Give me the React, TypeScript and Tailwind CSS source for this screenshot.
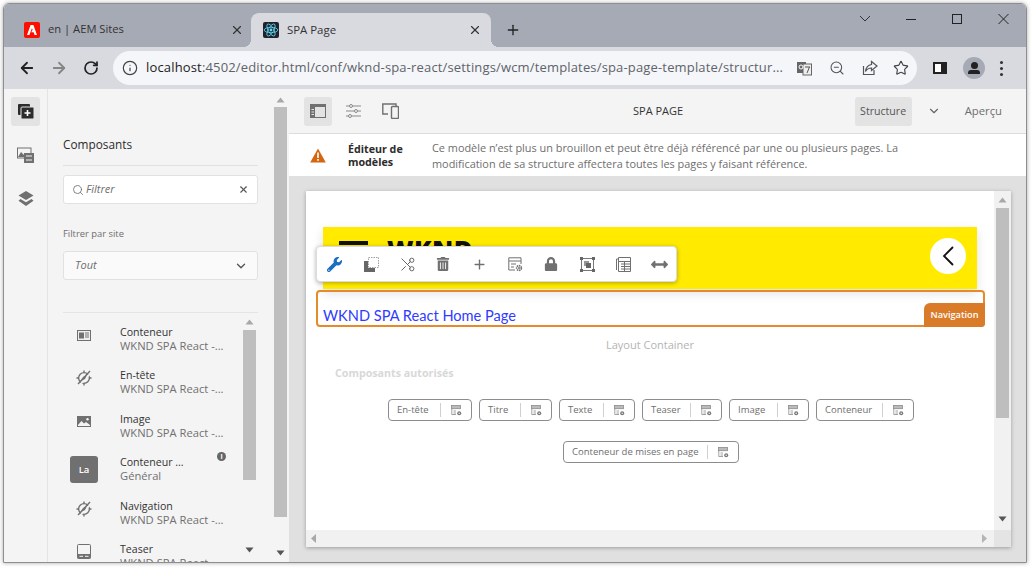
import React from "react";
import { FaWrench, FaTrashAlt, FaLock, FaArrowsAltH } from "react-icons/fa";
import { Scissors, X, Search, ChevronDown, ArrowLeft, ArrowRight, RotateCw, Info, ZoomOut, Star, Plus } from "lucide-react";

const Triangle = ({ dir, cls }: { dir: "up" | "down" | "right"; cls: string }) => (
  <svg width="9" height="6" viewBox="0 0 9 6" className={cls}>
    {dir === "up" && <path d="M4.5 0.5L8.5 5.5H0.5Z" fill="#a8a8a8" />}
    {dir === "down" && <path d="M4.5 5.5L8.5 0.5H0.5Z" fill="#555" />}
    {dir === "right" && <path d="M2 0L7 3L2 6Z" fill="#b4b4b4" />}
  </svg>
);

const AdobeIcon = () => (
  <svg width="16" height="16" viewBox="0 0 16 16">
    <rect width="16" height="16" rx="2" fill="#fa0f00" />
    <path d="M6.6 3H9.4L13 13H10.6L9.6 10.2H7.2L8.6 7.9L8 5.9L5.4 13H3Z" fill="#fff" />
  </svg>
);

const ReactIcon = () => (
  <svg width="16" height="16" viewBox="0 0 16 16">
    <rect width="16" height="16" rx="2" fill="#20232a" />
    <g fill="none" stroke="#61dafb" strokeWidth="0.8">
      <ellipse cx="8" cy="8" rx="6.8" ry="2.7" />
      <ellipse cx="8" cy="8" rx="6.8" ry="2.7" transform="rotate(60 8 8)" />
      <ellipse cx="8" cy="8" rx="6.8" ry="2.7" transform="rotate(120 8 8)" />
    </g>
    <circle cx="8" cy="8" r="1.4" fill="#61dafb" />
  </svg>
);

const CompassOff = () => (
  <svg width="16" height="16" viewBox="0 0 16 16" fill="none" stroke="#707070">
    <circle cx="8" cy="8" r="5.4" strokeWidth="1.4" />
    <path d="M8 0.5V2.5M8 13.5V15.5M0.5 8H2.5M13.5 8H15.5" strokeWidth="1.4" />
    <path d="M3.6 15L15.6 2" strokeWidth="1.8" stroke="#f4f4f4" />
    <path d="M2 14L14 1" strokeWidth="1.4" />
    <path d="M11 5L9 9L5 11L7 7Z" fill="#707070" stroke="none" />
  </svg>
);

const NewsIcon = () => (
  <svg width="14" height="11" viewBox="0 0 14 11">
    <rect x="0.5" y="0.5" width="13" height="10" fill="#eee" stroke="#707070" />
    <rect x="2" y="2.5" width="5" height="6" fill="#707070" />
    <path d="M8 3H12M8 5H12M8 7H12" stroke="#707070" />
  </svg>
);

const ImageIcon = () => (
  <svg width="14" height="11" viewBox="0 0 14 11">
    <rect width="14" height="11" fill="#707070" />
    <path d="M1 9L4.5 5L7 7.5L9 6L13 9V10H1Z" fill="#f4f4f4" />
    <circle cx="10.5" cy="3.2" r="1.2" fill="#f4f4f4" />
  </svg>
);

const TeaserIcon = () => (
  <svg width="14" height="15" viewBox="0 0 14 15">
    <rect x="0.5" y="0.5" width="13" height="14" rx="1" fill="none" stroke="#707070" />
    <rect x="0.5" y="10" width="13" height="4.5" fill="#707070" />
    <path d="M2.5 12.3H6M8 12.3H11.5" stroke="#f4f4f4" />
  </svg>
);

const TemplateCfg = ({ s = 15, c = "#707070" }: { s?: number; c?: string }) => (
  <svg width={s} height={s} viewBox="0 0 15 15" fill="none">
    <path d="M7 13H0.8V0.8H13V7" stroke={c} strokeWidth="1" />
    <path d="M1 4H13M3 7H8M3 10H6" stroke={c} strokeWidth="1" />
    <circle cx="11" cy="11" r="2.4" stroke={c} strokeWidth="1.6" strokeDasharray="1.4 0.6" />
    <circle cx="11" cy="11" r="1" fill={c} />
  </svg>
);

const ChipIcon = () => (
  <svg width="11" height="11" viewBox="0 0 11 11" fill="none">
    <rect x="0.5" y="0.5" width="9" height="3.2" fill="#bbb" stroke="#8a8a8a" strokeWidth="0.8" />
    <path d="M0.8 4V9.5H5M2.5 6H5M2.5 8H5" stroke="#8a8a8a" strokeWidth="0.8" />
    <circle cx="8.2" cy="8.2" r="2" fill="#777" />
    <circle cx="8.2" cy="8.2" r="0.7" fill="#fff" />
  </svg>
);

const Chip = ({ label, cls }: { label: string; cls: string }) => (
  <div className={`flex h-[22px] items-center rounded-[4px] border border-[#8c8c8c] bg-white ${cls}`}>
    <span className="flex-1 whitespace-nowrap pl-[8px] text-[9.5px] leading-none text-[#6e6e6e]">{label}</span>
    <span className="h-[14px] w-px bg-[#d0d0d0]" />
    <span className="flex w-[30px] shrink-0 justify-center">
      <ChipIcon />
    </span>
  </div>
);

const items = [
  { t: "Conteneur", s: "WKND SPA React -...", i: <NewsIcon /> },
  { t: "En-tête", s: "WKND SPA React -...", i: <CompassOff /> },
  { t: "Image", s: "WKND SPA React -...", i: <ImageIcon /> },
  {
    t: "Conteneur ...",
    s: "Général",
    i: (
      <div className="flex h-[27px] w-[28px] shrink-0 items-center justify-center self-start rounded-[3px] bg-[#707070] text-[9.5px] font-semibold text-white">
        La
      </div>
    ),
  },
  { t: "Navigation", s: "WKND SPA React -...", i: <CompassOff /> },
  { t: "Teaser", s: "WKND SPA React -...", i: <TeaserIcon /> },
];

const ToolCell = ({ children, cls = "w-[36px]" }: { children: React.ReactNode; cls?: string }) => (
  <div className={`flex shrink-0 items-center justify-center ${cls}`}>{children}</div>
);

export default function App() {
  return (
    <div className="h-[568px] w-[1032px] overflow-hidden bg-white pb-[5px] pl-[3px] pr-[5px] pt-[3px] font-['Open_Sans',sans-serif]">
      <div className="flex h-full flex-col overflow-hidden rounded-t-[6px] border-b border-l border-r border-t border-[#8e8e8e] shadow-[0_0_4px_rgba(0,0,0,0.35)]">
        {/* Tab strip */}
        <div className="flex h-[43px] shrink-0 items-end bg-[#a6aab5]">
          <div className="flex h-[34px] w-[247px] items-center pb-[1px] pl-[20px] pr-[7px]">
            <AdobeIcon />
            <span className="ml-[8px] flex-1 text-[11.2px] text-[#333]">en | AEM Sites</span>
            <X size={14} strokeWidth={2} className="text-[#333]" />
          </div>
          <div className="relative flex h-[34px] w-[240px] items-center rounded-t-[8px] bg-[#d9dadf] pb-[1px] pl-[12px] pr-[9px]">
            <span className="absolute bottom-0 left-[-8px] h-[8px] w-[8px] bg-[radial-gradient(circle_at_0_0,transparent_8px,#d9dadf_8px)]" />
            <span className="absolute bottom-0 right-[-8px] h-[8px] w-[8px] bg-[radial-gradient(circle_at_100%_0,transparent_8px,#d9dadf_8px)]" />
            <ReactIcon />
            <span className="ml-[8px] flex-1 text-[11.4px] text-[#333]">SPA Page</span>
            <X size={14} strokeWidth={2} className="text-[#333]" />
          </div>
          <div className="flex h-[34px] items-center pb-[1px] pl-[14px]">
            <Plus size={16} strokeWidth={2} className="text-[#222]" />
          </div>
          <div className="ml-auto flex h-[43px] items-start pr-[17px] pt-[8px] text-[#222]">
            <svg width="47" height="14" viewBox="0 0 47 14" fill="none" stroke="#333">
              <path d="M1 4L6 9L11 4" />
            </svg>
            <svg width="46" height="14" viewBox="0 0 46 14" fill="none" stroke="#222">
              <path d="M0 7.5H10" />
            </svg>
            <svg width="46" height="14" viewBox="0 0 46 14" fill="none" stroke="#222">
              <rect x="0.5" y="2.5" width="9" height="9" />
            </svg>
            <svg width="11" height="14" viewBox="0 0 11 14" fill="none" stroke="#222">
              <path d="M0.5 2L10.5 12M10.5 2L0.5 12" />
            </svg>
          </div>
        </div>

        {/* Address bar */}
        <div className="flex h-[42px] shrink-0 items-center bg-[#d9dadf] pl-[14px] pr-[14px]">
          <ArrowLeft size={18} strokeWidth={2.4} className="text-[#222]" />
          <ArrowRight size={18} strokeWidth={2.4} className="ml-[14px] text-[#858585]" />
          <RotateCw size={16} strokeWidth={2.6} className="ml-[15px] text-[#222]" />
          <div className="ml-[14px] flex h-[34px] w-[804px] items-center rounded-full bg-[#f4f6f9] pl-[9px]">
            <Info size={16} strokeWidth={1.8} className="text-[#444]" />
            <span className="ml-[8px] w-[640px] whitespace-nowrap text-[13px] tracking-[0.16px] text-[#5f6368]">
              <span className="text-[#222]">localhost</span>:4502/editor.html/conf/wknd-spa-react/settings/wcm/templates/spa-page-template/structur...
            </span>
            <svg width="15" height="15" viewBox="0 0 15 15" className="ml-[11px]">
              <rect x="0" y="1" width="9" height="11" fill="#666" />
              <rect x="6" y="3" width="8.5" height="11" fill="#eee" stroke="#666" />
              <circle cx="4" cy="6" r="2" fill="none" stroke="#fff" />
              <path d="M8 6H13M10 12L12.5 6" stroke="#555" />
            </svg>
            <ZoomOut size={16} strokeWidth={1.6} className="ml-[17px] text-[#555]" />
            <svg width="16" height="16" viewBox="0 0 16 16" fill="none" stroke="#555" strokeWidth="1.2" className="ml-[17px]">
              <path d="M1.5 6V14.5H12V10M9.5 1.5L15 6L9.5 10.5V8C6.5 8 5 9 3.5 11.5C4 7.5 6 5 9.5 4.5Z" />
            </svg>
            <Star size={16} strokeWidth={1.7} className="ml-[15px] text-[#444]" />
          </div>
          <svg width="14" height="12" viewBox="0 0 14 12" className="ml-[16px]">
            <rect x="1" y="1" width="12" height="10" fill="#fff" stroke="#222" strokeWidth="2" />
            <rect x="8" y="1" width="5" height="10" fill="#222" />
          </svg>
          <div className="relative ml-[16px] h-[22px] w-[22px] overflow-hidden rounded-full bg-[#a6aab5]">
            <span className="absolute left-[7.5px] top-[5px] h-[7px] w-[7px] rounded-full bg-[#222]" />
            <span className="absolute left-[5px] top-[13px] h-[4px] w-[12px] rounded-t-[3px] bg-[#222]" />
          </div>
          <div className="ml-[15px] flex flex-col gap-[3px]">
            <span className="h-[3px] w-[3px] rounded-full bg-[#333]" />
            <span className="h-[3px] w-[3px] rounded-full bg-[#333]" />
            <span className="h-[3px] w-[3px] rounded-full bg-[#333]" />
          </div>
        </div>

        {/* Body */}
        <div className="flex min-h-0 flex-1">
          {/* Rail */}
          <div className="flex w-[44px] shrink-0 flex-col items-center border-r border-[#e4e4e4] bg-[#f4f4f4] pt-[8px]">
            <div className="flex h-[29px] w-[29px] items-center justify-center rounded-[3px] bg-[#e3e3e3]">
              <svg width="16" height="15" viewBox="0 0 16 15">
                <rect x="0" y="0" width="12" height="11" rx="1" fill="#2c2c2c" />
                <rect x="3" y="3" width="13" height="12" rx="1" fill="#2c2c2c" stroke="#e3e3e3" />
                <path d="M9.5 6V12M6.5 9H12.5" stroke="#fff" strokeWidth="1.6" />
              </svg>
            </div>
            <div className="mt-[21px] flex h-[16px] items-center justify-center">
              <svg width="17" height="16" viewBox="0 0 17 16">
                <rect x="0.5" y="1" width="13.5" height="10" fill="#f4f4f4" stroke="#707070" />
                <path d="M1 10L4 5L7 8V10Z" fill="#707070" />
                <rect x="7" y="6" width="10" height="10" fill="#707070" />
                <path d="M9 9H15M9 13H15" stroke="#f4f4f4" />
              </svg>
            </div>
            <div className="mt-[27px] flex h-[16px] items-center justify-center">
              <svg width="16" height="15" viewBox="0 0 16 15">
                <path d="M8 0L15.5 4.5L8 9L0.5 4.5Z" fill="#707070" />
                <path d="M2.5 8L8 11.2L13.5 8L15.5 9.7L8 15L0.5 9.7Z" fill="#707070" />
              </svg>
            </div>
          </div>

          {/* Panel */}
          <div className="flex w-[225px] shrink-0 flex-col overflow-hidden bg-[#f4f4f4] pl-[15px] pr-[15px]">
            <div className="flex h-[77px] shrink-0 items-end border-b border-[#e0e0e0] pb-[12px] text-[11.8px] leading-[18px] text-[#2c2c2c]">
              Composants
            </div>
            <div className="mt-[9px] flex h-[29px] shrink-0 items-center rounded-[3px] border border-[#e1e1e1] bg-white pl-[8px] pr-[8px]">
              <Search size={12} strokeWidth={1.6} className="text-[#666]" />
              <span className="ml-[2px] flex-1 text-[11px] italic text-[#707070]">Filtrer</span>
              <X size={11} strokeWidth={2.4} className="text-[#555]" />
            </div>
            <div className="mt-[23px] shrink-0 text-[9.4px] leading-[14px] text-[#6e6e6e]">Filtrer par site</div>
            <div className="mt-[10px] flex h-[29px] shrink-0 items-center justify-between rounded-[3px] border border-[#e1e1e1] bg-[#fafafa] pl-[11px] pr-[9px]">
              <span className="text-[11px] italic text-[#6e6e6e]">Tout</span>
              <ChevronDown size={14} strokeWidth={2.4} className="text-[#555]" />
            </div>
            <div className="mt-[32px] flex min-h-0 flex-1 border-t border-[#e4e4e4]">
              <div className="w-[179px] shrink-0 pt-[12px]">
                {items.map((it) => (
                  <div key={it.t + it.s} className="relative flex h-[43.4px]">
                    <div className="mt-[1px] flex h-[18px] w-[57px] shrink-0 items-center justify-center pr-[15px]">{it.i}</div>
                    <div className="whitespace-nowrap text-[10.6px] leading-[14px]">
                      <div className="text-[#333]">{it.t}</div>
                      <div className="text-[11.2px] text-[#707070]">{it.s}</div>
                    </div>
                    {it.t === "Conteneur ..." && (
                      <span className="absolute left-[154px] top-[-3px] flex h-[9px] w-[9px] items-center justify-center rounded-full bg-[#666] text-[7px] font-bold leading-none text-white">
                        i
                      </span>
                    )}
                  </div>
                ))}
              </div>
              <div className="flex w-[15px] shrink-0 flex-col items-center">
                <Triangle dir="up" cls="mt-[6px] shrink-0" />
                <div className="mt-[5px] h-[150px] w-[13px] shrink-0 bg-[#bebebe]" />
                <Triangle dir="down" cls="mt-[67px] shrink-0" />
              </div>
            </div>
          </div>

          {/* Outer scrollbar */}
          <div className="flex w-[16px] shrink-0 flex-col items-center bg-[#f4f4f4] pr-[2px]">
            <Triangle dir="up" cls="mt-[8px] shrink-0" />
            <div className="mt-[4px] h-[410px] w-[13px] shrink-0 bg-[#bebebe]" />
            <Triangle dir="down" cls="mt-[33px] shrink-0" />
          </div>

          {/* Editor */}
          <div className="flex min-w-0 flex-1 flex-col bg-[#e0e0e0]">
            <div className="flex h-[45px] shrink-0 items-center border-b border-[#dcdcdc] bg-[#f4f4f4] pl-[15px] pr-[24px]">
              <div className="flex h-[29px] w-[28px] items-center justify-center rounded-[3px] bg-[#e3e3e3]">
                <svg width="16" height="14" viewBox="0 0 16 14">
                  <rect x="0.5" y="0.5" width="15" height="13" fill="none" stroke="#707070" />
                  <rect x="0.5" y="0.5" width="15" height="2.5" fill="#707070" />
                  <rect x="0.5" y="3" width="4.5" height="10.5" fill="#707070" />
                  <path d="M1.5 5.5H4M1.5 8H4M1.5 10.5H4" stroke="#e3e3e3" />
                </svg>
              </div>
              <svg width="15" height="14" viewBox="0 0 15 14" fill="none" stroke="#8a8a8a" className="ml-[14px]">
                <path d="M0 2H15M0 7H15M0 12H15" />
                <circle cx="5" cy="2" r="1.5" fill="#f4f4f4" />
                <circle cx="10" cy="7" r="1.5" fill="#f4f4f4" />
                <circle cx="4" cy="12" r="1.5" fill="#f4f4f4" />
              </svg>
              <svg width="17" height="16" viewBox="0 0 17 16" fill="none" stroke="#707070" className="ml-[21px]">
                <path d="M6 11H0.8V1H14V3" strokeWidth="1.4" />
                <rect x="9.5" y="3.5" width="7" height="12" rx="1" fill="#f4f4f4" strokeWidth="1.4" />
              </svg>
              <div className="ml-[234px] w-[54px] whitespace-nowrap pt-[1px] text-[11px] text-[#333]">SPA PAGE</div>
              <div className="ml-auto flex h-[29px] w-[57px] items-center justify-center rounded-[3px] bg-[#e3e3e3] pt-[1px] text-[10.6px] text-[#555]">
                Structure
              </div>
              <ChevronDown size={14} strokeWidth={2} className="ml-[15px] text-[#666]" />
              <div className="ml-[24px] pt-[1px] text-[11.3px] text-[#6e6e6e]">Aperçu</div>
            </div>
            <div className="flex h-[42px] shrink-0 items-center bg-white pl-[21px]">
              <svg width="16" height="15" viewBox="0 0 16 15">
                <path d="M8 0.5L15.8 14.5H0.2Z" fill="#d4660f" />
                <rect x="7.2" y="4.5" width="1.6" height="5.5" fill="#fff" />
                <rect x="7.2" y="11" width="1.6" height="1.8" fill="#fff" />
              </svg>
              <div className="ml-[22px] w-[84px] pt-[2px] text-[10.7px] font-bold leading-[13.5px] text-[#2c2c2c]">
                Éditeur de
                <br />
                modèles
              </div>
              <div className="whitespace-nowrap pt-[2px] text-[10.9px] leading-[16px] text-[#6e6e6e]">
                Ce modèle n’est plus un brouillon et peut être déjà référencé par une ou plusieurs pages. La
                <br />
                modification de sa structure affectera toutes les pages y faisant référence.
              </div>
            </div>
            <div className="min-h-0 flex-1 pb-[15px] pl-[17px] pr-[15px] pt-[15px]">
              {/* Canvas */}
              <div className="flex h-full flex-col bg-white shadow-[0_1px_4px_rgba(0,0,0,0.3)]">
                <div className="flex min-h-0 flex-1">
                  <div className="relative min-w-0 flex-1 pt-[36px]">
                    <div className="relative mx-[17px] h-[62px] overflow-hidden bg-[#ffea00] shadow-[0_4px_10px_rgba(0,0,0,0.12)]">
                      <div className="absolute left-[16px] top-[14px] h-[4px] w-[29px] bg-[#111]" />
                      <div className="absolute left-[64px] top-[8px] text-[25.5px] font-extrabold leading-[28px] tracking-[0.02em] text-[#111]">
                        WKND
                      </div>
                      <div className="absolute right-[11px] top-[11px] flex h-[36px] w-[36px] items-center justify-center rounded-full bg-white">
                        <svg width="12" height="20" viewBox="0 0 12 20" fill="none" stroke="#111" strokeWidth="1.8">
                          <path d="M11 1L2 10L11 19" />
                        </svg>
                      </div>
                    </div>
                    <div className="relative ml-[10px] mr-[9px] mt-px h-[37px] rounded-[4px] border-2 border-[#e68a2e] pl-[5px] pt-[14px]">
                      <div className="whitespace-nowrap font-['Lato',sans-serif] text-[14.6px] leading-[20px] text-[#2f3bff]">
                        WKND SPA React Home Page
                      </div>
                      <div className="absolute bottom-[-2px] right-[-2px] flex h-[24px] w-[61px] items-center justify-center rounded-bl-none rounded-br-[4px] rounded-tl-[6px] bg-[#d97b28] text-[9.2px] font-semibold text-white">
                        Navigation
                      </div>
                    </div>
                    <div className="mt-[10px] text-center text-[11px] leading-[15px] text-[#b4b4b4]">Layout Container</div>
                    <div className="ml-[29px] mt-[14px] text-[10.7px] font-bold leading-[15px] text-[#d8d8d8]">Composants autorisés</div>
                    <div className="mt-[18px] flex justify-center gap-[7px] pl-[2px]">
                      <Chip label="En-tête" cls="w-[84px]" />
                      <Chip label="Titre" cls="w-[73px]" />
                      <Chip label="Texte" cls="w-[76px]" />
                      <Chip label="Teaser" cls="w-[80px]" />
                      <Chip label="Image" cls="w-[80px]" />
                      <Chip label="Conteneur" cls="w-[98px]" />
                    </div>
                    <div className="mt-[20px] flex justify-center pl-[2px]">
                      <Chip label="Conteneur de mises en page" cls="w-[176px]" />
                    </div>

                    {/* Floating component toolbar */}
                    <div className="absolute left-[10px] top-[55px] flex h-[36px] w-[361px] items-center rounded-[4px] border border-[#dcdcdc] bg-white text-[#707070] shadow-[0_1px_4px_rgba(0,0,0,0.3)]">
                      <ToolCell cls="w-[36px] pr-[2px]"><FaWrench size={15} className="text-[#1a6fc0]" /></ToolCell>
                      <ToolCell>
                        <svg width="15" height="15" viewBox="0 0 15 15">
                          <rect x="4.5" y="0.5" width="10" height="10" fill="none" stroke="#a0a0a0" strokeDasharray="1.5 1" />
                          <path d="M0 4H4V11H11V15H0Z" fill="#666" />
                        </svg>
                      </ToolCell>
                      <ToolCell><Scissors size={17} strokeWidth={1.4} className="-scale-x-100 text-[#666]" /></ToolCell>
                      <ToolCell><FaTrashAlt size={14} /></ToolCell>
                      <ToolCell><Plus size={15} strokeWidth={2.2} /></ToolCell>
                      <ToolCell><TemplateCfg /></ToolCell>
                      <ToolCell><FaLock size={14} /></ToolCell>
                      <ToolCell>
                        <svg width="15" height="15" viewBox="0 0 15 15">
                          <rect x="1.5" y="1.5" width="12" height="12" fill="none" stroke="#777" />
                          <rect x="0" y="0" width="3" height="3" fill="#666" />
                          <rect x="12" y="0" width="3" height="3" fill="#666" />
                          <rect x="0" y="12" width="3" height="3" fill="#666" />
                          <rect x="12" y="12" width="3" height="3" fill="#666" />
                          <rect x="4" y="4" width="5" height="5" fill="#999" />
                          <rect x="6" y="6" width="5" height="5" fill="#666" />
                        </svg>
                      </ToolCell>
                      <ToolCell>
                        <svg width="15" height="15" viewBox="0 0 15 15" fill="none" stroke="#707070">
                          <path d="M0.5 13V2H2.5V0.5H14.5V14.5H2.5" />
                          <path d="M2.5 2V14.5M2.5 4.5H14.5M5 7H14.5M5 9.5H14.5M5 12H14.5M8.5 4.5V14.5" />
                        </svg>
                      </ToolCell>
                      <ToolCell><FaArrowsAltH size={17} /></ToolCell>
                    </div>
                  </div>
                  {/* Canvas vertical scrollbar */}
                  <div className="flex w-[17px] shrink-0 flex-col items-center bg-[#f1f1f1]">
                    <Triangle dir="up" cls="mt-[6px] shrink-0" />
                    <div className="mt-[5px] h-[210px] w-[13px] shrink-0 bg-[#bebebe]" />
                    <Triangle dir="down" cls="mt-[98px] shrink-0" />
                  </div>
                </div>
                {/* Canvas horizontal scrollbar */}
                <div className="flex h-[17px] shrink-0 items-center justify-between bg-[#f1f1f1] pl-[5px]">
                  <svg width="6" height="9" viewBox="0 0 6 9">
                    <path d="M5 0L0 4.5L5 9Z" fill="#a8a8a8" />
                  </svg>
                  <div className="flex items-center">
                    <svg width="6" height="9" viewBox="0 0 6 9" className="mr-[7px]">
                      <path d="M1 0L6 4.5L1 9Z" fill="#b4b4b4" />
                    </svg>
                    <div className="h-[17px] w-[17px] bg-[#e4e4e4]" />
                  </div>
                </div>
              </div>
            </div>
          </div>
        </div>
      </div>
    </div>
  );
}
